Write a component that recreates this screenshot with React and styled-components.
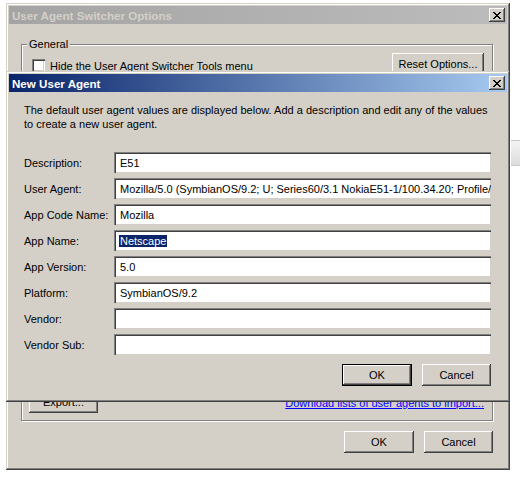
import React from "react";
import styled, { createGlobalStyle } from "styled-components";

const GlobalStyle = createGlobalStyle`
  body {
    margin: 0;
    background: #ffffff;
    font-family: "Liberation Sans", Arial, sans-serif;
    font-size: 11px;
    color: #000000;
  }
`;

const fields = [
  { label: "Description:", value: "E51" },
  {
    label: "User Agent:",
    value:
      "Mozilla/5.0 (SymbianOS/9.2; U; Series60/3.1 NokiaE51-1/100.34.20; Profile/MIDP-2.0 Configuration/CLDC-1.1)",
  },
  { label: "App Code Name:", value: "Mozilla" },
  { label: "App Name:", value: "Netscape", selected: true },
  { label: "App Version:", value: "5.0" },
  { label: "Platform:", value: "SymbianOS/9.2" },
  { label: "Vendor:", value: "" },
  { label: "Vendor Sub:", value: "" },
];

export default function App() {
  return (
    <>
      <GlobalStyle />
      <Desktop>
        <DesktopStrip />
        <Window $left={6} $top={3} $width={504} $height={467}>
          <TitleBar $active={false}>
            <TitleText $active={false}>User Agent Switcher Options</TitleText>
            <CloseButton />
          </TitleBar>
          <OptionsBody>
            <GroupBox>
              <Legend>General</Legend>
              <GroupTop>
                <CheckRow>
                  <CheckBox />
                  <span>Hide the User Agent Switcher Tools menu</span>
                </CheckRow>
                <Button $width={92}>Reset Options...</Button>
              </GroupTop>
              <GroupBottom>
                <Button $width={69}>Export...</Button>
                <Link>Download lists of user agents to import...</Link>
              </GroupBottom>
            </GroupBox>
            <ButtonRow>
              <Button $width={70}>OK</Button>
              <Button $width={69}>Cancel</Button>
            </ButtonRow>
          </OptionsBody>
        </Window>

        <Window $left={6} $top={71} $width={504} $height={331}>
          <TitleBar $active>
            <TitleText $active>New User Agent</TitleText>
            <CloseButton />
          </TitleBar>
          <DialogBody>
            <Intro>
              The default user agent values are displayed below. Add a description and edit any of the values
              <br />
              to create a new user agent.
            </Intro>
            <FieldList>
              {fields.map((f) => (
                <FieldRow key={f.label}>
                  <FieldLabel>{f.label}</FieldLabel>
                  <TextBox>
                    {f.selected ? <Selected>{f.value}</Selected> : f.value}
                  </TextBox>
                </FieldRow>
              ))}
            </FieldList>
            <ButtonRow $tight>
              <Button $width={70} $default>
                OK
              </Button>
              <Button $width={69}>Cancel</Button>
            </ButtonRow>
          </DialogBody>
        </Window>
      </Desktop>
    </>
  );
}

function CloseButton() {
  return (
    <CloseBox>
      <svg width="8" height="7" viewBox="0 0 8 7" shapeRendering="crispEdges">
        <path
          d="M0 0h2v1h-2zM6 0h2v1h-2zM1 1h2v1h-2zM5 1h2v1h-2zM2 2h4v1h-4zM3 3h2v1h-2zM2 4h4v1h-4zM1 5h2v1h-2zM5 5h2v1h-2zM0 6h2v1h-2zM6 6h2v1h-2z"
          fill="#000"
        />
      </svg>
    </CloseBox>
  );
}

const Desktop = styled.div`
  position: relative;
  width: 520px;
  height: 484px;
  overflow: hidden;
  background: #ffffff;
`;

const DesktopStrip = styled.div`
  position: absolute;
  left: 511px;
  top: 140px;
  width: 9px;
  height: 24px;
  background: linear-gradient(#f4f4f4, #dcdcdc);
  border-top: 1px solid #c8c8c8;
  border-bottom: 1px solid #c8c8c8;
`;

const Window = styled.div`
  position: absolute;
  left: ${(p) => p.$left}px;
  top: ${(p) => p.$top}px;
  width: ${(p) => p.$width}px;
  height: ${(p) => p.$height}px;
  box-sizing: border-box;
  padding: 3px;
  background: #d4d0c8;
  box-shadow: inset -1px -1px #404040, inset 1px 1px #d4d0c8,
    inset -2px -2px #808080, inset 2px 2px #ffffff;
  display: flex;
  flex-direction: column;
`;

const TitleBar = styled.div`
  height: 18px;
  flex-shrink: 0;
  display: flex;
  align-items: center;
  justify-content: space-between;
  padding: 0 2px 0 3px;
  background: ${(p) =>
    p.$active
      ? "linear-gradient(to right, #0a246a, #a6caf0)"
      : "linear-gradient(to right, #a4a4a4, #bcbcbc)"};
`;

const TitleText = styled.span`
  font-weight: bold;
  font-size: 11.6px;
  color: ${(p) => (p.$active ? "#ffffff" : "#d4d0c8")};
`;

const CloseBox = styled.div`
  width: 16px;
  height: 14px;
  box-sizing: border-box;
  background: #d4d0c8;
  display: flex;
  align-items: center;
  justify-content: center;
  box-shadow: inset -1px -1px #404040, inset 1px 1px #ffffff,
    inset -2px -2px #808080, inset 2px 2px #d4d0c8;
`;

const OptionsBody = styled.div`
  flex: 1;
  display: flex;
  flex-direction: column;
  padding: 20px 14px 14px 12px;
`;

const GroupBox = styled.div`
  position: relative;
  flex: 1;
  display: flex;
  flex-direction: column;
  justify-content: space-between;
  border: 1px solid #808080;
  box-shadow: inset 1px 1px #ffffff, 1px 1px #ffffff;
  padding: 8px 8px 7px 10px;
`;

const Legend = styled.span`
  position: absolute;
  left: 5px;
  top: -8px;
  padding: 0 2px;
  background: #d4d0c8;
  line-height: 14px;
`;

const GroupTop = styled.div`
  display: flex;
  align-items: flex-start;
  justify-content: space-between;
`;

const CheckRow = styled.label`
  display: flex;
  align-items: center;
  gap: 5px;
  margin-top: 6px;
`;

const CheckBox = styled.span`
  width: 13px;
  height: 13px;
  box-sizing: border-box;
  background: #ffffff;
  box-shadow: inset 1px 1px #808080, inset 2px 2px #404040,
    inset -1px -1px #ffffff, inset -2px -2px #d4d0c8;
`;

const GroupBottom = styled.div`
  display: flex;
  align-items: flex-start;
  justify-content: space-between;
  margin-left: -3px;
`;

const Link = styled.span`
  color: #0000ff;
  text-decoration: underline;
  margin-top: 6px;
`;

const ButtonRow = styled.div`
  display: flex;
  justify-content: flex-end;
  gap: 10px;
  margin-top: ${(p) => (p.$tight ? "9px" : "10px")};
  flex-shrink: 0;
`;

const Button = styled.div`
  width: ${(p) => p.$width}px;
  height: 22px;
  box-sizing: border-box;
  display: flex;
  align-items: center;
  justify-content: center;
  background: #d4d0c8;
  box-shadow: ${(p) =>
    p.$default
      ? "inset 0 0 0 1px #000000, inset -2px -2px #404040, inset 2px 2px #ffffff, inset -3px -3px #808080"
      : "inset -1px -1px #404040, inset 1px 1px #ffffff, inset -2px -2px #808080"};
`;

const DialogBody = styled.div`
  flex: 1;
  display: flex;
  flex-direction: column;
  padding: 11px 16px 13px 15px;
`;

const Intro = styled.p`
  margin: 0 0 21px;
  line-height: 14px;
`;

const FieldList = styled.div`
  display: flex;
  flex-direction: column;
  gap: 5px;
`;

const FieldRow = styled.div`
  display: flex;
  align-items: center;
`;

const FieldLabel = styled.span`
  width: 90px;
  flex-shrink: 0;
`;

const TextBox = styled.div`
  flex: 1;
  height: 21px;
  box-sizing: border-box;
  background: #ffffff;
  padding: 0 4px 0 6px;
  display: flex;
  align-items: center;
  white-space: nowrap;
  overflow: hidden;
  box-shadow: inset 1px 1px #808080, inset 2px 2px #404040,
    inset -1px -1px #d4d0c8, inset -2px -2px #ffffff;
`;

const Selected = styled.span`
  background: #0a246a;
  color: #ffffff;
  margin-left: -1px;
  padding: 0 1px;
`;
